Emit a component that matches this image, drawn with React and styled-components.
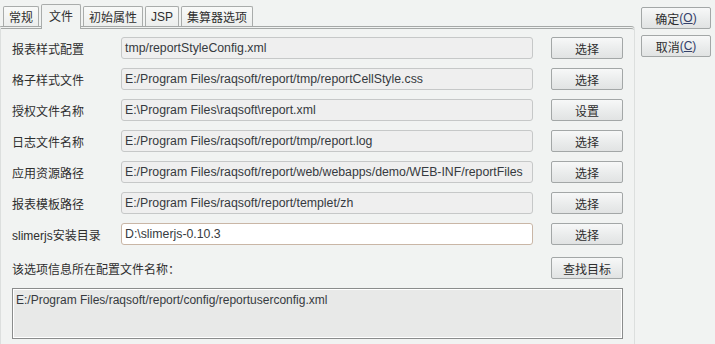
import React from "react";
import styled, { createGlobalStyle } from "styled-components";

const Global = createGlobalStyle`
  html, body { margin: 0; padding: 0; background: #f1f3f2; }
  body { font-family: "Liberation Sans", "Noto Sans CJK SC", sans-serif; }
`;

const Window = styled.div`
  width: 715px;
  height: 344px;
  display: flex;
  background: #f1f3f2;
  overflow: hidden;
`;

const Main = styled.div`
  width: 635px;
  display: flex;
  flex-direction: column;
`;

const TabStrip = styled.div`
  height: 26px;
  display: flex;
  align-items: flex-end;
  gap: 2px;
  padding-left: 3px;
  box-sizing: border-box;
`;

const Tab = styled.div`
  box-sizing: border-box;
  height: ${(p) => (p.$active ? "25px" : "20px")};
  margin-bottom: ${(p) => (p.$active ? "-3px" : "0")};
  padding: ${(p) => (p.$active ? "0 7px 3px" : "0 5px")};
  position: ${(p) => (p.$active ? "relative" : "static")};
  z-index: ${(p) => (p.$active ? 1 : "auto")};
  border: 1px solid #a9acab;
  border-bottom: none;
  border-radius: 2px 2px 0 0;
  background: ${(p) =>
    p.$active ? "#f1f3f2" : "linear-gradient(#f9faf9, #eceeed)"};
  display: flex;
  align-items: center;
  font-family: "Noto Sans CJK SC", sans-serif;
  font-size: 12px;
  color: #2e2e2e;
  white-space: nowrap;
`;

const LatinTab = styled.span`
  font-family: "Liberation Sans", sans-serif;
`;

const Panel = styled.div`
  flex: 1;
  border-top: 3px double #a5a8a7;
  border-right: 1px solid #dcdfde;
  border-left: 1px solid #dcdfde;
  border-top-right-radius: 4px;
  padding: 8px 11px 0 11px;
  display: flex;
  flex-direction: column;
`;

const Rows = styled.div`
  display: flex;
  flex-direction: column;
  gap: 9px;
`;

const Row = styled.div`
  display: flex;
  align-items: center;
  height: 22px;
`;

const Label = styled.div`
  width: 109px;
  font-family: "Noto Sans CJK SC", sans-serif;
  font-size: 12px;
  color: #2e2e2e;
  white-space: nowrap;
`;

const LatinLabel = styled.span`
  font-family: "Liberation Sans", sans-serif;
`;

const Field = styled.div`
  box-sizing: border-box;
  width: 412px;
  height: 22px;
  margin-right: 18px;
  border: 1px solid ${(p) => (p.$editable ? "#c9b6a6" : "#c6c8c8")};
  border-radius: 3px;
  background: ${(p) => (p.$editable ? "#ffffff" : "#efefef")};
  padding: 0 3px;
  display: flex;
  align-items: center;
  font-family: "Liberation Sans", sans-serif;
  font-size: 12.3px;
  color: #363a40;
  white-space: nowrap;
  overflow: hidden;
`;

const Button = styled.button`
  box-sizing: border-box;
  width: ${(p) => p.$w || 72}px;
  height: 22px;
  padding: 0;
  margin: 0;
  border: 1px solid #a3a7a7;
  border-radius: 2px;
  background: linear-gradient(#f7f8f8, #e9ebeb 60%, #e1e3e3);
  font-family: "Noto Sans CJK SC", sans-serif;
  font-size: 12px;
  color: #2e2e2e;
  display: flex;
  align-items: center;
  justify-content: center;
  cursor: default;
`;

const Mnemonic = styled.span`
  font-family: "Liberation Sans", sans-serif;
  color: #34406a;
`;

const U = styled.span`
  text-decoration: underline;
`;

const FindRow = styled.div`
  margin-top: 12px;
  height: 22px;
  display: flex;
  align-items: center;
  justify-content: space-between;
`;

const InfoLabel = styled.div`
  font-family: "Noto Sans CJK SC", sans-serif;
  font-size: 12px;
  color: #2e2e2e;
`;

const PathBox = styled.div`
  box-sizing: border-box;
  margin-top: 9px;
  width: 611px;
  height: 51px;
  border: 1px solid #8a8c8c;
  box-shadow: inset 0 0 0 1px #ffffff;
  background: #e8e9e8;
  padding: 4px 3px;
  font-family: "Liberation Sans", sans-serif;
  font-size: 12px;
  color: #363a40;
`;

const Side = styled.div`
  display: flex;
  flex-direction: column;
  gap: 6px;
  padding: 7px 0 0 6px;
`;

const rows = [
  { label: "报表样式配置", value: "tmp/reportStyleConfig.xml", btn: "选择" },
  { label: "格子样式文件", value: "E:/Program Files/raqsoft/report/tmp/reportCellStyle.css", btn: "选择" },
  { label: "授权文件名称", value: "E:\\Program Files\\raqsoft\\report.xml", btn: "设置" },
  { label: "日志文件名称", value: "E:/Program Files/raqsoft/report/tmp/report.log", btn: "选择" },
  { label: "应用资源路径", value: "E:/Program Files/raqsoft/report/web/webapps/demo/WEB-INF/reportFiles", btn: "选择" },
  { label: "报表模板路径", value: "E:/Program Files/raqsoft/report/templet/zh", btn: "选择" },
  { label: "slimerjs安装目录", value: "D:\\slimerjs-0.10.3", btn: "选择", editable: true },
];

function renderLabel(text) {
  if (text.startsWith("slimerjs")) {
    return (
      <>
        <LatinLabel>slimerjs</LatinLabel>
        {text.slice(8)}
      </>
    );
  }
  return text;
}

export default function App() {
  return (
    <>
      <Global />
      <Window>
        <Main>
          <TabStrip>
            <Tab>常规</Tab>
            <Tab $active>文件</Tab>
            <Tab>初始属性</Tab>
            <Tab>
              <LatinTab>JSP</LatinTab>
            </Tab>
            <Tab>集算器选项</Tab>
          </TabStrip>
          <Panel>
            <Rows>
              {rows.map((r) => (
                <Row key={r.label}>
                  <Label>{renderLabel(r.label)}</Label>
                  <Field $editable={r.editable}>{r.value}</Field>
                  <Button>{r.btn}</Button>
                </Row>
              ))}
            </Rows>
            <FindRow>
              <InfoLabel>该选项信息所在配置文件名称：</InfoLabel>
              <Button>查找目标</Button>
            </FindRow>
            <PathBox>E:/Program Files/raqsoft/report/config/reportuserconfig.xml</PathBox>
          </Panel>
        </Main>
        <Side>
          <Button $w={70}>
            确定<Mnemonic>(<U>O</U>)</Mnemonic>
          </Button>
          <Button $w={70}>
            取消<Mnemonic>(<U>C</U>)</Mnemonic>
          </Button>
        </Side>
      </Window>
    </>
  );
}
